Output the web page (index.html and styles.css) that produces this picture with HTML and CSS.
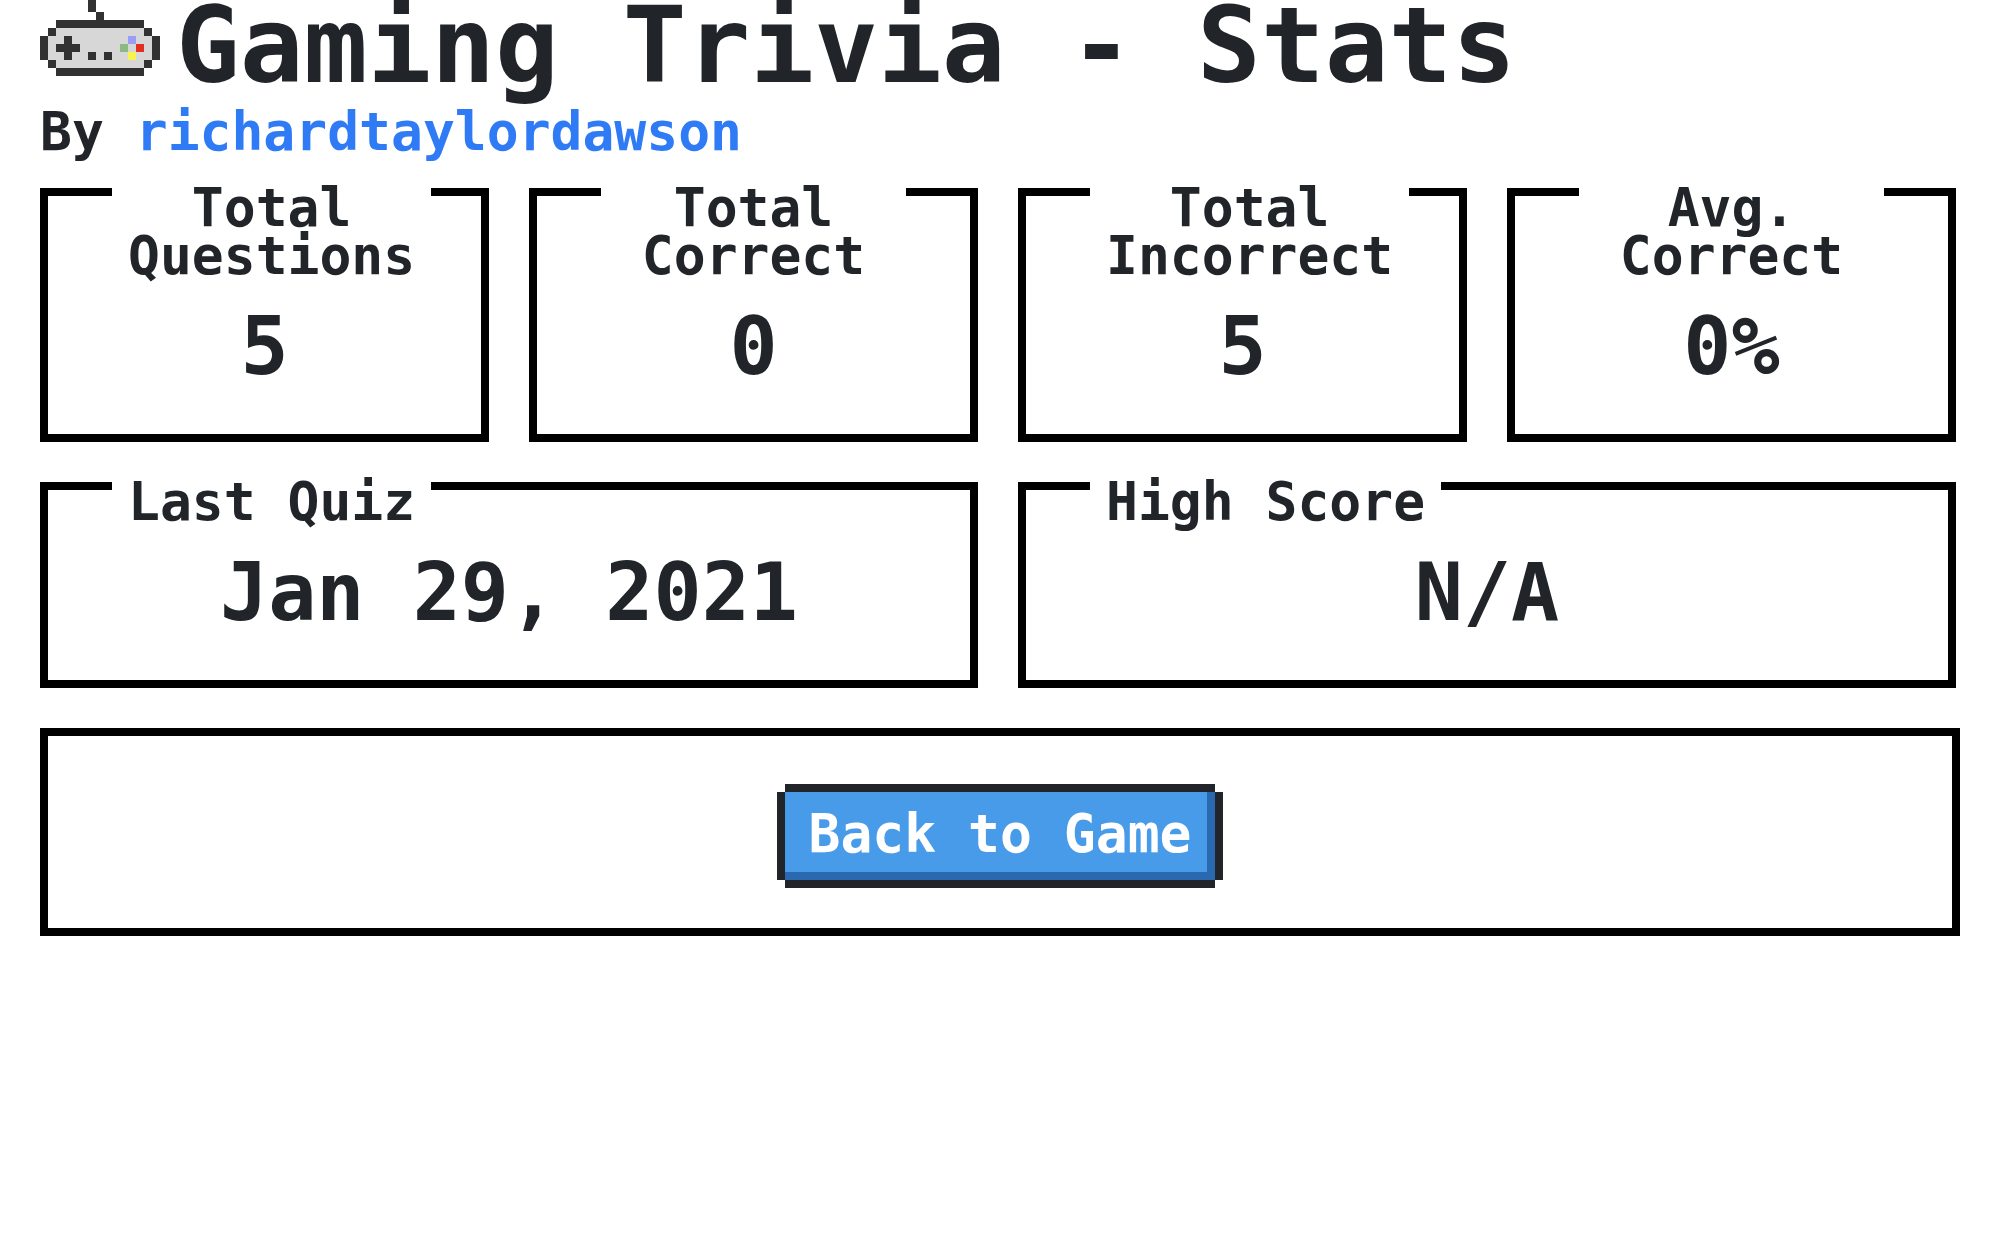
FILE: index.html
```html
<!DOCTYPE html>
<html lang="en">
<head>
  <meta charset="utf-8">
  <meta name="viewport" content="width=device-width, initial-scale=1">
  <title>Gaming Trivia - Stats</title>
  <link rel="stylesheet" href="styles.css">
</head>
<body>
  <main class="page">
    <header>
      <h1 class="title">
        <svg class="gamepad" viewBox="0 0 120 76" shape-rendering="crispEdges" aria-hidden="true">
          <path fill="#d7d7d7" d="M16 28h88v8h8v24h-8v8H16v-8H8V36h8z"/>
          <path fill="#323232" d="M48 0h8v12h-8zM56 12h8v8h-8zM16 20h88v8H16zM8 28h8v8H8zM104 28h8v8h-8zM0 36h8v24H0zM112 36h8v24h-8zM8 60h8v8H8zM104 60h8v8h-8zM16 68h88v8H16zM24 36h8v8h8v8h-8v8h-8v-8h-8v-8h8zM48 52h8v8h-8zM64 52h8v8h-8z"/>
          <path fill="#9b9cf3" d="M88 36h8v8h-8z"/>
          <path fill="#8bb980" d="M80 44h8v8h-8z"/>
          <path fill="#e13022" d="M96 44h8v8h-8z"/>
          <path fill="#f8f350" d="M88 52h8v8h-8z"/>
        </svg>
        <span>Gaming Trivia - Stats</span>
      </h1>
      <p class="author">By <a class="author-link" href="#richardtaylordawson">richardtaylordawson</a></p>
    </header>

    <div class="row row-four">
      <section class="card">
        <h2 class="card-title">Total Questions</h2>
        <p class="card-value">5</p>
      </section>
      <section class="card">
        <h2 class="card-title">Total Correct</h2>
        <p class="card-value">0</p>
      </section>
      <section class="card">
        <h2 class="card-title">Total Incorrect</h2>
        <p class="card-value">5</p>
      </section>
      <section class="card">
        <h2 class="card-title">Avg. Correct</h2>
        <p class="card-value">0%</p>
      </section>
    </div>

    <div class="row row-two">
      <section class="card">
        <h2 class="card-title">Last Quiz</h2>
        <p class="card-value">Jan 29, 2021</p>
      </section>
      <section class="card">
        <h2 class="card-title">High Score</h2>
        <p class="card-value">N/A</p>
      </section>
    </div>

    <div class="actions">
      <button class="btn" type="button">Back to Game</button>
    </div>
  </main>
</body>
</html>
```

FILE: styles.css
```css
* {
  box-sizing: border-box;
}

body {
  margin: 0;
  background: #fff;
  color: #212529;
  font-family: "DejaVu Sans Mono", "Liberation Mono", monospace;
  font-weight: 700;
  font-size: 53px;
  line-height: 48px;
}

h1,
h2,
p {
  margin: 0;
  font-size: inherit;
}

.page {
  padding: 0 56px 40px 40px;
}

.title {
  display: flex;
  align-items: flex-start;
  gap: 16px;
  font-size: 106px;
  line-height: 92px;
}

.gamepad {
  flex: none;
  width: 120px;
  height: 76px;
}

.author {
  margin: 16px 0 32px;
}

.author-link {
  color: #2f7bf6;
  text-decoration: none;
}

.row {
  display: grid;
  gap: 40px;
  margin-bottom: 40px;
  padding-right: 4px;
}

.row-four {
  grid-template-columns: repeat(4, minmax(0, 1fr));
}

.row-two {
  grid-template-columns: repeat(2, minmax(0, 1fr));
}

.card {
  padding: 0 64px 51px;
  border: 8px solid #000;
}

/* Sits over the top border and hides the part of it behind the text. */
.card-title {
  width: fit-content;
  margin: -12px 0 31px;
  padding: 0 16px;
  background: #fff;
  text-align: center;
}

.card-value {
  font-size: 80px;
  line-height: 72px;
  text-align: center;
}

.actions {
  display: flex;
  justify-content: center;
  padding: 48px 48px 40px;
  border: 8px solid #000;
}

/* Stepped pixel frame: one solid shadow for each side, corners left open. */
.btn {
  margin: 8px;
  padding: 18px 24px 22px;
  border: 0;
  background: #489be8;
  box-shadow:
    inset -8px -8px #2a69b0,
    0 -8px #212529,
    0 8px #212529,
    -8px 0 #212529,
    8px 0 #212529;
  color: #fff;
  font: inherit;
  cursor: pointer;
}
```
